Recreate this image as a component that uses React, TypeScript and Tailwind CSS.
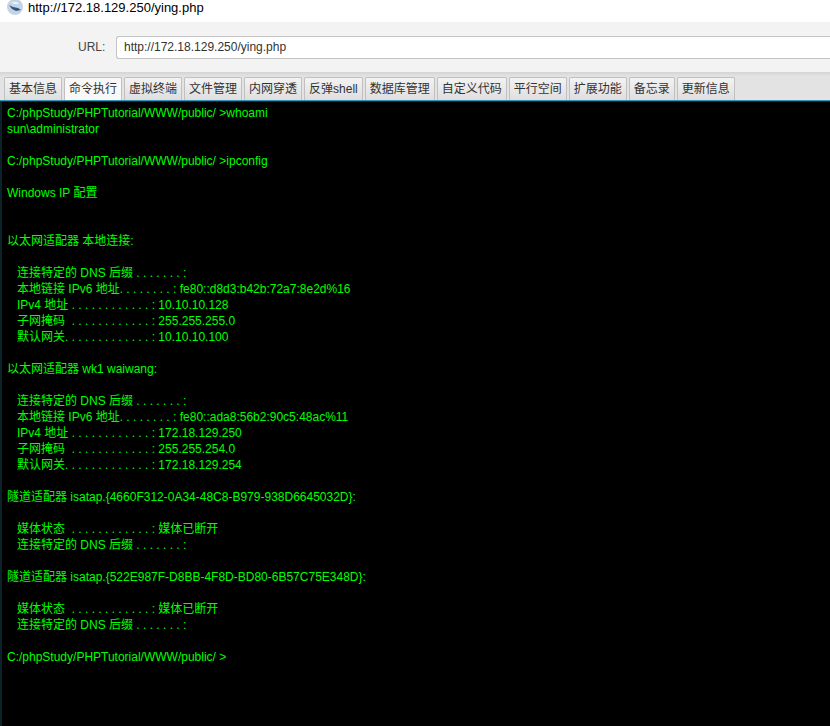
const tabs = [
  "基本信息",
  "命令执行",
  "虚拟终端",
  "文件管理",
  "内网穿透",
  "反弹shell",
  "数据库管理",
  "自定义代码",
  "平行空间",
  "扩展功能",
  "备忘录",
  "更新信息",
];

const lines = [
  "C:/phpStudy/PHPTutorial/WWW/public/ >whoami",
  "sun\\administrator",
  "",
  "C:/phpStudy/PHPTutorial/WWW/public/ >ipconfig",
  "",
  "Windows IP 配置",
  "",
  "",
  "以太网适配器 本地连接:",
  "",
  "   连接特定的 DNS 后缀 . . . . . . . :",
  "   本地链接 IPv6 地址. . . . . . . . : fe80::d8d3:b42b:72a7:8e2d%16",
  "   IPv4 地址 . . . . . . . . . . . . : 10.10.10.128",
  "   子网掩码  . . . . . . . . . . . . : 255.255.255.0",
  "   默认网关. . . . . . . . . . . . . : 10.10.10.100",
  "",
  "以太网适配器 wk1 waiwang:",
  "",
  "   连接特定的 DNS 后缀 . . . . . . . :",
  "   本地链接 IPv6 地址. . . . . . . . : fe80::ada8:56b2:90c5:48ac%11",
  "   IPv4 地址 . . . . . . . . . . . . : 172.18.129.250",
  "   子网掩码  . . . . . . . . . . . . : 255.255.254.0",
  "   默认网关. . . . . . . . . . . . . : 172.18.129.254",
  "",
  "隧道适配器 isatap.{4660F312-0A34-48C8-B979-938D6645032D}:",
  "",
  "   媒体状态  . . . . . . . . . . . . : 媒体已断开",
  "   连接特定的 DNS 后缀 . . . . . . . :",
  "",
  "隧道适配器 isatap.{522E987F-D8BB-4F8D-BD80-6B57C75E348D}:",
  "",
  "   媒体状态  . . . . . . . . . . . . : 媒体已断开",
  "   连接特定的 DNS 后缀 . . . . . . . :",
  "",
  "C:/phpStudy/PHPTutorial/WWW/public/ >",
];

const Favicon = () => (
  <svg width="16" height="16" viewBox="0 0 16 16" className="relative -top-[4px] shrink-0">
    <circle cx="8" cy="8" r="8" fill="#c3d4e6" />
    <path d="M2 6 L6 8 L11 9 L14 11 L9 12 L5 10 Z" fill="#34557f" />
    <path d="M4 3 L10 3 L12 5 L7 5 Z" fill="#eef3f8" />
  </svg>
);

export default function App() {
  return (
    <div className="flex h-[726px] w-[830px] flex-col overflow-hidden bg-black font-['Liberation_Sans','Noto_Sans_CJK_SC',sans-serif]">
      <div className="flex h-[22px] shrink-0 items-center gap-[5px] bg-white pl-[7px] text-[13px] text-black">
        <Favicon />
        <span className="relative -top-[3px]">http://172.18.129.250/ying.php</span>
      </div>

      <div className="flex h-[50px] shrink-0 items-center bg-[#f3f3f3] pl-[78px]">
        <span className="w-[38px] text-[12px] text-[#444444]">URL:</span>
        <div className="flex h-[23px] flex-1 items-center rounded-l-[3px] border border-r-0 border-[#c4c4c4] bg-white pl-[7px] text-[12px] text-[#333333]">
          http://172.18.129.250/ying.php
        </div>
      </div>

      <div className="flex h-[28px] shrink-0 items-end gap-[2px] bg-[linear-gradient(#d4d4d4,#e3e3e3_15%,#e3e3e3)] pl-[4px]">
        {tabs.map((t, i) => (
          <div
            key={t}
            className={`flex h-[23px] items-center rounded-t-[2px] border border-b-0 border-[#c0c0c0] px-[4px] text-[12px] leading-none whitespace-nowrap text-[#333333] ${
              i === 1 ? "bg-[#f8f8f8]" : "bg-[linear-gradient(#f3f3f3,#dedede)]"
            }`}
          >
            {t}
          </div>
        ))}
      </div>
      <div className="h-[1px] shrink-0 bg-[#3a94b5]" />
      <div className="h-[1px] shrink-0 bg-[#0c3038]" />

      <div className="flex-1 border-l-2 border-[#0a2228] bg-black pt-[3px] pl-[5px] text-[12px] leading-[16px] whitespace-pre text-[#00ff00]">
        {lines.map((l, i) => (
          <div key={i} className="h-[16px]">
            {l}
          </div>
        ))}
      </div>
    </div>
  );
}
